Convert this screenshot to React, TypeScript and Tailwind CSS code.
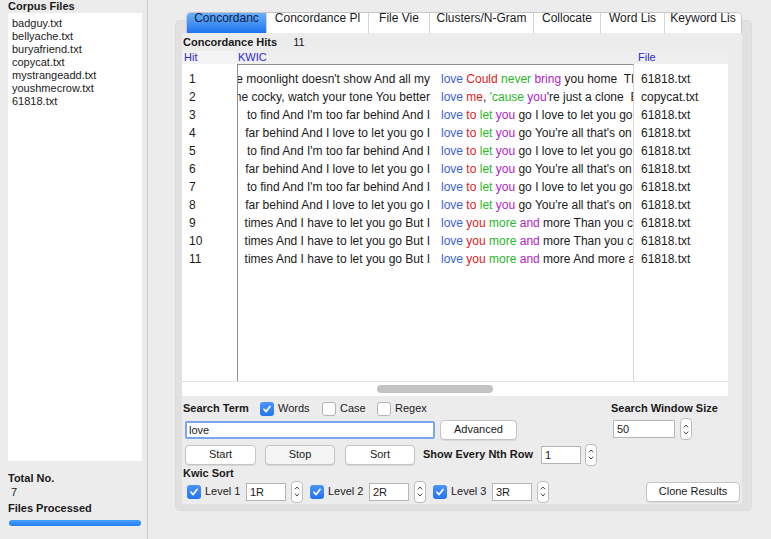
import React from 'react';

type Seg = [string, string];

const B = '#3a5fdc';
const R = '#e0201c';
const G = '#2bb52b';
const P = '#b21cc4';
const K = '#1a1a1a';

const files = [
  'badguy.txt',
  'bellyache.txt',
  'buryafriend.txt',
  'copycat.txt',
  'mystrangeadd.txt',
  'youshmecrow.txt',
  '61818.txt',
];

const findLeft = "to find And I'm too far behind And I";
const farLeft = 'far behind And I love to let you go I';
const timesLeft = 'times And I have to let you go But I';
const letGo: Seg[] = [['love', B], [' ', K], ['to', R], [' ', K], ['let', G], [' ', K], ['you', P], [' go I love to let you go I love', K]];
const letOn: Seg[] = [['love', B], [' ', K], ['to', R], [' ', K], ['let', G], [' ', K], ['you', P], [" go You're all that's on my mind", K]];
const moreThan: Seg[] = [['love', B], [' ', K], ['you', R], [' ', K], ['more', G], [' ', K], ['and', P], [' more Than you could', K]];

const rows: { left: string; right: Seg[]; file: string }[] = [
  {
    left: "The moonlight doesn't show And all my",
    right: [['love', B], [' ', K], ['Could', R], [' ', K], ['never', G], [' ', K], ['bring', P], [' you home\u00a0\u00a0They', K]],
    file: '61818.txt',
  },
  {
    left: 'Now you make me cocky, watch your tone You better',
    right: [['love', B], [' ', K], ['me', R], [', ', K], ["'cause", G], [' ', K], ['you', P], ["'re just a clone\u00a0\u00a0But", K]],
    file: 'copycat.txt',
  },
  { left: findLeft, right: letGo, file: '61818.txt' },
  { left: farLeft, right: letOn, file: '61818.txt' },
  { left: findLeft, right: letGo, file: '61818.txt' },
  { left: farLeft, right: letOn, file: '61818.txt' },
  { left: findLeft, right: letGo, file: '61818.txt' },
  { left: farLeft, right: letOn, file: '61818.txt' },
  { left: timesLeft, right: moreThan, file: '61818.txt' },
  { left: timesLeft, right: moreThan, file: '61818.txt' },
  {
    left: timesLeft,
    right: [['love', B], [' ', K], ['you', R], [' ', K], ['more', G], [' ', K], ['and', P], [' more And more and', K]],
    file: '61818.txt',
  },
];

// tab labels are clipped by the control in the original
const tabs = [
  { label: 'Concordanc', w: 'w-[79px]' },
  { label: 'Concordance Pl', w: 'w-[102px]' },
  { label: 'File Vie', w: 'w-[61px]' },
  { label: 'Clusters/N-Gram', w: 'w-[104px]' },
  { label: 'Collocate', w: 'w-[67px]' },
  { label: 'Word Lis', w: 'w-[64px]' },
  { label: 'Keyword Lis', w: 'w-[77px]' },
];

function Checkbox({ checked }: { checked?: boolean }) {
  if (checked) {
    return (
      <div className="w-[14px] h-[14px] rounded-[3px] bg-gradient-to-b from-[#4a94fa] to-[#2274f2] flex items-center justify-center shrink-0">
        <svg width="10" height="10" viewBox="0 0 10 10">
          <path d="M2 5.2 L4.1 7.6 L8 2.4" fill="none" stroke="white" strokeWidth="1.7" strokeLinecap="round" strokeLinejoin="round" />
        </svg>
      </div>
    );
  }
  return <div className="w-[14px] h-[14px] rounded-[3px] bg-white border border-[#b3b3b3] shrink-0" />;
}

function Stepper() {
  return (
    <div className="w-[12px] h-[22px] rounded-[4px] bg-white border border-[#bdbdbd] flex flex-col items-center justify-center gap-[3px] shrink-0">
      <svg width="6" height="4" viewBox="0 0 6 4">
        <path d="M0.8 3.4 L3 1 L5.2 3.4" fill="none" stroke="#4a4a4a" strokeWidth="1" />
      </svg>
      <svg width="6" height="4" viewBox="0 0 6 4">
        <path d="M0.8 0.6 L3 3 L5.2 0.6" fill="none" stroke="#4a4a4a" strokeWidth="1" />
      </svg>
    </div>
  );
}

function Field({ value, w }: { value: string; w: string }) {
  return (
    <div className={`${w} h-[18px] bg-white border border-[#b5b5b5] pl-[3px] text-[11px] leading-[16px] text-[#1a1a1a] shrink-0`}>
      {value}
    </div>
  );
}

function Button({ label, w, muted }: { label: string; w: string; muted?: boolean }) {
  return (
    <div
      className={`${w} h-[20px] rounded-[4px] border border-[#c4c4c4] shadow-[0_1px_0_rgba(0,0,0,0.08)] flex items-center justify-center text-[11px] text-[#1a1a1a] shrink-0 ${
        muted ? 'bg-[#f5f5f5]' : 'bg-white'
      }`}
    >
      {label}
    </div>
  );
}

export default function App() {
  return (
    <div className="w-[771px] h-[539px] bg-[#ececec] flex font-['Liberation_Sans',Arial,sans-serif] text-[#1a1a1a] overflow-hidden">
      {/* Left sidebar */}
      <div className="w-[148px] h-full border-r border-[#cdcdcd] flex flex-col shrink-0">
        <div className="h-[13px] pl-[8px] text-[11px] leading-[13px] font-bold">Corpus Files</div>
        <div className="ml-[8px] w-[134px] h-[448px] bg-white pt-[4px] pl-[4px]">
          {files.map((f) => (
            <div key={f} className="text-[11px] leading-[13px]">
              {f}
            </div>
          ))}
        </div>
        <div className="mt-[11px] pl-[8px] text-[11px] leading-[13px] font-bold">Total No.</div>
        <div className="mt-[1px] pl-[11px] text-[11px] leading-[13px]">7</div>
        <div className="mt-[3px] pl-[8px] text-[11px] leading-[13px] font-bold">Files Processed</div>
        <div className="mt-[5px] ml-[9px] w-[132px] h-[6px] rounded-full bg-gradient-to-b from-[#4b9ff9] to-[#1f7ff0]" />
      </div>

      {/* Main area */}
      <div className="flex-1">
        <div className="ml-[27px] mt-[20px] w-[577px] h-[491px] rounded-[5px] bg-[#e1e1e1] border border-[#dcdcdc]">
          {/* Tabs */}
          <div className="-mt-[9px] ml-[10px] flex w-max rounded-t-[5px] overflow-hidden border border-b-0 border-[#c6c6c6]">
            {tabs.map((t, i) => (
              <div
                key={t.label}
                className={`${t.w} h-[20px] overflow-hidden whitespace-nowrap text-[12px] leading-[11px] flex justify-center ${
                  i === 0
                    ? 'bg-gradient-to-b from-[#6ab0fb] to-[#1c74f0] text-[#0f2142]'
                    : 'bg-white border-l border-[#d4d4d4] text-[#1a1a1a]'
                }`}
              >
                {t.label}
              </div>
            ))}
          </div>

          {/* Content */}
          <div className="ml-[6px] w-[560px] h-[471px] bg-[#ececec] flex flex-col">
            <div className="h-[18px] flex items-center pl-[1px] text-[11px]">
              <span className="font-bold">Concordance Hits</span>
              <span className="ml-[16px]">11</span>
            </div>

            {/* Table */}
            <div className="flex w-[546px] h-[345px]">
              {/* Hit column */}
              <div className="w-[55px] flex flex-col">
                <div className="h-[13px] bg-[#f3f3f3] pl-[2px] text-[11px] leading-[13px] text-[#2b2bcc]">Hit</div>
                <div className="h-[317px] bg-white pt-[6px] pl-[7px]">
                  {rows.map((_, i) => (
                    <div key={i} className="h-[18px] text-[12px] leading-[18px]">
                      {i + 1}
                    </div>
                  ))}
                </div>
                <div className="h-[15px] bg-white border-t border-[#e2e2e2]" />
              </div>

              {/* KWIC column */}
              <div className="w-[397px] flex flex-col">
                <div className="h-[13px] bg-[#efefef] pl-[1px] text-[11px] leading-[13px] text-[#2b2bcc]">KWIC</div>
                <div className="h-[317px] bg-white border-l border-t border-r border-l-[#8f8f8f] border-t-[#8f8f8f] border-r-[#d6d6d6] pt-[5px]">
                  {rows.map((r, i) => (
                    <div key={i} className="h-[18px] flex text-[12px] leading-[18px]">
                      <div className="w-[194px] flex justify-end overflow-hidden whitespace-nowrap pr-[2px]">
                        <span className="shrink-0">{r.left}</span>
                      </div>
                      <div className="ml-[9px] w-[192px] overflow-hidden whitespace-pre">
                        {r.right.map(([t, c], j) => (
                          <span key={j} style={{ color: c }}>
                            {t}
                          </span>
                        ))}
                      </div>
                    </div>
                  ))}
                </div>
                <div className="h-[15px] bg-white border-t border-[#e2e2e2] flex items-center">
                  <div className="ml-[140px] w-[116px] h-[8px] rounded-full bg-[#c3c3c3]" />
                </div>
              </div>

              {/* File column */}
              <div className="w-[94px] flex flex-col">
                <div className="h-[13px] bg-[#efefef] pl-[4px] text-[11px] leading-[13px] text-[#2b2bcc]">File</div>
                <div className="h-[317px] bg-white pt-[6px] pl-[7px]">
                  {rows.map((r, i) => (
                    <div key={i} className="h-[18px] text-[12px] leading-[18px]">
                      {r.file}
                    </div>
                  ))}
                </div>
                <div className="h-[15px] bg-white border-t border-[#e2e2e2]" />
              </div>
            </div>

            {/* Search controls */}
            <div className="flex mt-[5px]">
              <div className="w-[429px] flex flex-col">
                <div className="h-[15px] flex items-center text-[11px]">
                  <span className="ml-[1px] w-[77px] font-bold">Search Term</span>
                  <div className="w-[62px] flex items-center">
                    <Checkbox checked />
                    <span className="ml-[4px]">Words</span>
                  </div>
                  <div className="w-[55px] flex items-center">
                    <Checkbox />
                    <span className="ml-[4px]">Case</span>
                  </div>
                  <div className="flex items-center">
                    <Checkbox />
                    <span className="ml-[4px]">Regex</span>
                  </div>
                </div>
                <div className="mt-[4px] h-[19px] flex items-center">
                  <div className="ml-[3px] w-[250px] h-[18px] bg-white border-2 border-[#79a7ef] rounded-[2px] pl-[2px] text-[11px] leading-[14px]">
                    love
                  </div>
                  <div className="ml-[5px]">
                    <Button label="Advanced" w="w-[77px]" />
                  </div>
                </div>
                <div className="mt-[5px] h-[21px] flex items-center w-[500px]">
                  <div className="ml-[3px]">
                    <Button label="Start" w="w-[71px]" />
                  </div>
                  <div className="ml-[9px]">
                    <Button label="Stop" w="w-[70px]" muted />
                  </div>
                  <div className="ml-[10px]">
                    <Button label="Sort" w="w-[70px]" />
                  </div>
                  <span className="ml-[8px] w-[118px] text-[11px] font-bold whitespace-nowrap">Show Every Nth Row</span>
                  <Field value="1" w="w-[40px]" />
                  <div className="ml-[4px]">
                    <Stepper />
                  </div>
                </div>
              </div>
              <div className="flex flex-col">
                <div className="h-[15px] flex items-center text-[11px] font-bold">Search Window Size</div>
                <div className="mt-[2px] h-[22px] flex items-center">
                  <div className="ml-[2px]">
                    <Field value="50" w="w-[62px]" />
                  </div>
                  <div className="ml-[5px]">
                    <Stepper />
                  </div>
                </div>
              </div>
            </div>

            <div className="mt-[2px] h-[13px] pl-[1px] text-[11px] leading-[13px] font-bold">Kwic Sort</div>
            <div className="mt-[1px] h-[21px] flex items-center text-[11px]">
              {['1', '2', '3'].map((n) => (
                <div key={n} className="w-[123px] flex items-center first:ml-[5px]">
                  <Checkbox checked />
                  <span className="ml-[4px] w-[41px]">Level {n}</span>
                  <Field value={`${n}R`} w="w-[40px]" />
                  <div className="ml-[5px]">
                    <Stepper />
                  </div>
                </div>
              ))}
              <div className="ml-auto mr-[2px]">
                <Button label="Clone Results" w="w-[94px]" />
              </div>
            </div>
          </div>
        </div>
      </div>
    </div>
  );
}
